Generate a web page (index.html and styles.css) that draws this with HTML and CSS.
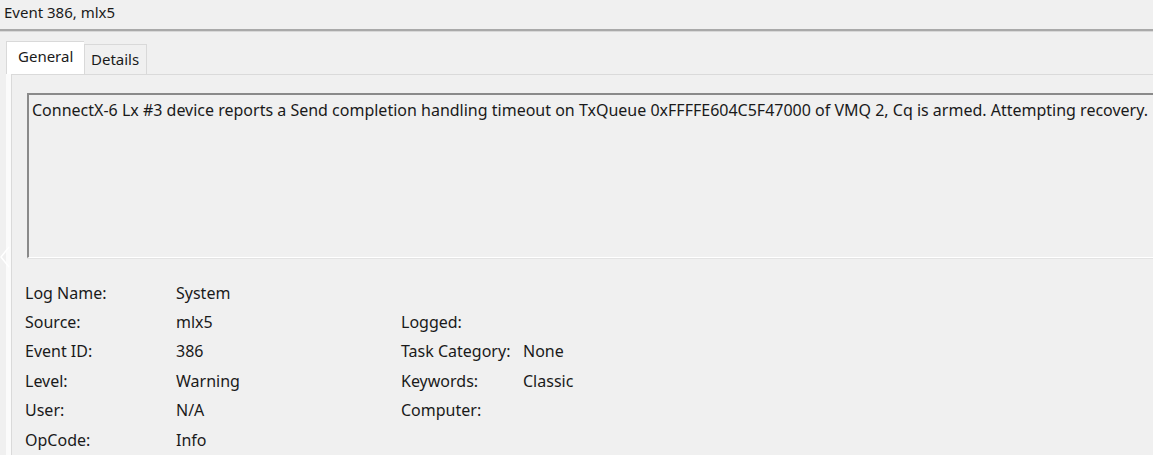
FILE: index.html
```html
<!DOCTYPE html>
<html>
<head>
<meta charset="utf-8">
<link rel="stylesheet" href="styles.css">
</head>
<body>
<div class="window">
  <div class="titlebar">Event 386, mlx5</div>
  <div class="tabs">
    <div class="tab active">General</div>
    <div class="tab">Details</div>
  </div>
  <div class="page">
    <div class="panel">
      <div class="message">ConnectX-6 Lx #3 device reports a Send completion handling timeout on TxQueue 0xFFFFE604C5F47000 of VMQ 2, Cq is armed. Attempting recovery.</div>
      <div class="props">
        <div>Log Name:</div><div>System</div><div></div><div></div>
        <div>Source:</div><div>mlx5</div><div>Logged:</div><div></div>
        <div>Event ID:</div><div>386</div><div>Task Category:</div><div>None</div>
        <div>Level:</div><div>Warning</div><div>Keywords:</div><div>Classic</div>
        <div>User:</div><div>N/A</div><div>Computer:</div><div></div>
        <div>OpCode:</div><div>Info</div><div></div><div></div>
      </div>
    </div>
  </div>
  <svg class="chevron" width="10" height="22" viewBox="0 0 10 22"><path d="M9 1 L1 11 L9 21" fill="none" stroke="#ffffff" stroke-width="1.5"/></svg>
</div>
</body>
</html>
```
FILE: styles.css
```css
html, body {
  margin: 0;
  padding: 0;
  background: #f0f0f0;
  overflow: hidden;
}
body {
  font-family: "Noto Sans", "Open Sans", sans-serif;
  font-size: 16px;
  color: #1a1a1a;
}
.window {
  position: relative;
  width: 1153px;
  height: 455px;
  overflow: hidden;
}
.titlebar {
  height: 29px;
  line-height: 24px;
  padding-left: 4px;
  font-size: 15px;
  border-bottom: 2px solid #a9a9a9;
  box-shadow: 0 1px 0 #d8d8d8;
}
.tabs {
  display: flex;
  align-items: flex-end;
  margin-top: 10px;
  padding-left: 6px;
  height: 33px;
  font-size: 15px;
}
.tab {
  box-sizing: border-box;
  border: 1px solid #d9d9d9;
  border-bottom: none;
  background: #f0f0f0;
  height: 30px;
  line-height: 28px;
  padding: 0 6px;
  width: 63px;
}
.tab.active {
  background: #ffffff;
  height: 33px;
  width: 78px;
  padding: 0 0 0 11px;
  line-height: 29px;
  border-right: none;
}
.page {
  margin-left: 6px;
  border-left: 5px solid #fbfbfb;
}
.panel {
  border-top: 1px solid #dadada;
  border-left: 1px solid #dadada;
  padding: 18px 0 0 15px;
  height: 400px;
}
.message {
  box-sizing: border-box;
  width: 1200px;
  height: 165px;
  border-top: 2px solid #8a8a8a;
  border-left: 2px solid #8a8a8a;
  border-bottom: 1px solid #ffffff;
  box-shadow: 0 1px 0 #e3e3e3;
  padding: 5px 3px;
  line-height: 20px;
  white-space: nowrap;
}
.props {
  display: grid;
  grid-template-columns: 151px 225px 122px 200px;
  grid-auto-rows: 29.4px;
  align-items: center;
  margin-top: 20px;
  margin-left: -2px;
}
.chevron {
  position: absolute;
  left: 0;
  top: 246px;
}
```
